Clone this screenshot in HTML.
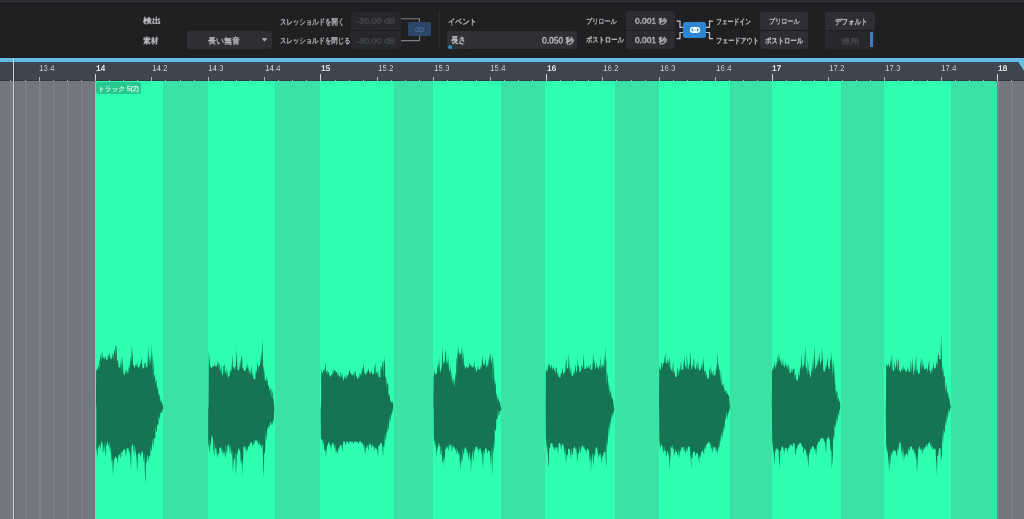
<!DOCTYPE html>
<html><head><meta charset="utf-8">
<style>
*{margin:0;padding:0;box-sizing:border-box}
html,body{width:1024px;height:519px;overflow:hidden;background:#1f2022;font-family:"Liberation Sans",sans-serif}
.abs{position:absolute}
#top{position:absolute;left:0;top:0;width:1024px;height:58px;background:#1f2022}
#topstrip{position:absolute;left:0;top:0;width:1024px;height:4.2px;background:#2a2b2e;border-bottom:1.2px solid #161719}
#blue{position:absolute;left:0;top:58px;width:1024px;height:4px;background:linear-gradient(#78bde3 0,#63bbe2 1.2px,#60bae2 3px,#6bc0e6 4px)}
#navy{position:absolute;left:0;top:56.5px;width:1024px;height:1.5px;background:#161c28}
#tri{position:absolute;left:1018.3px;top:62px;width:0;height:0;border-top:8.5px solid #66bfe6;border-left:5.7px solid transparent}
#ruler{position:absolute;left:0;top:62px;width:1024px;height:19px;background:linear-gradient(#354960 0,#3b4656 1.5px,#3c4550 3px,#3c4550 100%);overflow:hidden}
.tk{position:absolute;bottom:0;width:1px;height:1.5px;background:#aeb2b9}
.tt{height:4px}
.tb{height:7px;width:1px;background:#d0d3d8}
.lb{position:absolute;will-change:transform;top:1.5px;font-size:20px;color:#c3c6cc;letter-spacing:0;line-height:1;transform:scale(0.4);transform-origin:0 0}
.lbb{font-weight:bold;-webkit-text-stroke:0;color:#e2e4e8;transform:scale(0.42);top:1.6px}
#main{position:absolute;left:0;top:81px;width:1024px;height:438px;background:#73767e;overflow:hidden}
.gl{position:absolute;top:0;width:1.5px;height:438px;background:rgba(255,255,255,0.05)}
.gb{background:rgba(255,255,255,0.09)}
.evd{position:absolute;top:0;height:438px;background:#3be2a5;border-radius:3px 3px 0 0}
.evb{position:absolute;top:0;height:438px;background:#2effb1}
#play{position:absolute;left:12.6px;top:58px;width:1.4px;height:461px;background:#cdd1d8;box-shadow:1px 0 1px rgba(0,0,0,0.12)}
.t{position:absolute;color:#c9cbd0;font-size:9.5px;white-space:nowrap;line-height:1}
.tt2{position:absolute;will-change:transform;font-size:10px;line-height:1;white-space:nowrap;transform-origin:0 0;-webkit-text-stroke:0.4px currentColor}
.box{position:absolute;background:#2c2e32;border-radius:3px}
</style></head><body>
<div id="top"></div>
<div id="topstrip"></div>
<div id="navy"></div>
<div id="blue"></div>
<div id="ruler">
<div class="abs" style="left:0;bottom:0;width:1024px;height:1.2px;background:#2f3b42"></div>
<div class="tk" style="left:10px"></div>
<div class="tk" style="left:25px"></div>
<div class="tk tt" style="left:39px"></div>
<div class="tk" style="left:53px"></div>
<div class="tk" style="left:67px"></div>
<div class="tk" style="left:81px"></div>
<div class="tk tb" style="left:95px"></div>
<div class="tk" style="left:109px"></div>
<div class="tk" style="left:123px"></div>
<div class="tk" style="left:137px"></div>
<div class="tk tt" style="left:151px"></div>
<div class="tk" style="left:165px"></div>
<div class="tk" style="left:180px"></div>
<div class="tk" style="left:194px"></div>
<div class="tk tt" style="left:208px"></div>
<div class="tk" style="left:222px"></div>
<div class="tk" style="left:236px"></div>
<div class="tk" style="left:250px"></div>
<div class="tk tt" style="left:264px"></div>
<div class="tk" style="left:278px"></div>
<div class="tk" style="left:292px"></div>
<div class="tk" style="left:306px"></div>
<div class="tk tb" style="left:320px"></div>
<div class="tk" style="left:335px"></div>
<div class="tk" style="left:349px"></div>
<div class="tk" style="left:363px"></div>
<div class="tk tt" style="left:377px"></div>
<div class="tk" style="left:391px"></div>
<div class="tk" style="left:405px"></div>
<div class="tk" style="left:419px"></div>
<div class="tk tt" style="left:433px"></div>
<div class="tk" style="left:447px"></div>
<div class="tk" style="left:461px"></div>
<div class="tk" style="left:476px"></div>
<div class="tk tt" style="left:490px"></div>
<div class="tk" style="left:504px"></div>
<div class="tk" style="left:518px"></div>
<div class="tk" style="left:532px"></div>
<div class="tk tb" style="left:546px"></div>
<div class="tk" style="left:560px"></div>
<div class="tk" style="left:574px"></div>
<div class="tk" style="left:588px"></div>
<div class="tk tt" style="left:602px"></div>
<div class="tk" style="left:616px"></div>
<div class="tk" style="left:631px"></div>
<div class="tk" style="left:645px"></div>
<div class="tk tt" style="left:659px"></div>
<div class="tk" style="left:673px"></div>
<div class="tk" style="left:687px"></div>
<div class="tk" style="left:701px"></div>
<div class="tk tt" style="left:715px"></div>
<div class="tk" style="left:729px"></div>
<div class="tk" style="left:743px"></div>
<div class="tk" style="left:757px"></div>
<div class="tk tb" style="left:772px"></div>
<div class="tk" style="left:786px"></div>
<div class="tk" style="left:800px"></div>
<div class="tk" style="left:814px"></div>
<div class="tk tt" style="left:828px"></div>
<div class="tk" style="left:842px"></div>
<div class="tk" style="left:856px"></div>
<div class="tk" style="left:870px"></div>
<div class="tk tt" style="left:884px"></div>
<div class="tk" style="left:898px"></div>
<div class="tk" style="left:912px"></div>
<div class="tk" style="left:927px"></div>
<div class="tk tt" style="left:941px"></div>
<div class="tk" style="left:955px"></div>
<div class="tk" style="left:969px"></div>
<div class="tk" style="left:983px"></div>
<div class="tk tb" style="left:997px"></div>
<div class="tk" style="left:1011px"></div>
<div class="lb" style="left:39.3px">13.4</div>
<div class="lb lbb" style="left:95.8px">14</div>
<div class="lb" style="left:152.1px">14.2</div>
<div class="lb" style="left:208.4px">14.3</div>
<div class="lb" style="left:264.8px">14.4</div>
<div class="lb lbb" style="left:321.3px">15</div>
<div class="lb" style="left:377.6px">15.2</div>
<div class="lb" style="left:433.9px">15.3</div>
<div class="lb" style="left:490.3px">15.4</div>
<div class="lb lbb" style="left:546.8px">16</div>
<div class="lb" style="left:603.1px">16.2</div>
<div class="lb" style="left:659.5px">16.3</div>
<div class="lb" style="left:715.8px">16.4</div>
<div class="lb lbb" style="left:772.3px">17</div>
<div class="lb" style="left:828.6px">17.2</div>
<div class="lb" style="left:885.0px">17.3</div>
<div class="lb" style="left:941.3px">17.4</div>
<div class="lb lbb" style="left:997.8px">18</div>
</div>
<svg class="abs" style="left:1010px;top:56px" width="14" height="20"><path d="M8.3,6 L14,6 L14,14.8Z" fill="#66bfe6"/></svg>
<div id="main">
<div class="gl" style="left:10px"></div>
<div class="gl" style="left:25px"></div>
<div class="gl gb" style="left:39px"></div>
<div class="gl" style="left:53px"></div>
<div class="gl" style="left:67px"></div>
<div class="gl" style="left:81px"></div>
<div class="gl gb" style="left:95px"></div>
<div class="gl" style="left:109px"></div>
<div class="gl" style="left:123px"></div>
<div class="gl" style="left:137px"></div>
<div class="gl gb" style="left:151px"></div>
<div class="gl" style="left:165px"></div>
<div class="gl" style="left:180px"></div>
<div class="gl" style="left:194px"></div>
<div class="gl gb" style="left:208px"></div>
<div class="gl" style="left:222px"></div>
<div class="gl" style="left:236px"></div>
<div class="gl" style="left:250px"></div>
<div class="gl gb" style="left:264px"></div>
<div class="gl" style="left:278px"></div>
<div class="gl" style="left:292px"></div>
<div class="gl" style="left:306px"></div>
<div class="gl gb" style="left:320px"></div>
<div class="gl" style="left:335px"></div>
<div class="gl" style="left:349px"></div>
<div class="gl" style="left:363px"></div>
<div class="gl gb" style="left:377px"></div>
<div class="gl" style="left:391px"></div>
<div class="gl" style="left:405px"></div>
<div class="gl" style="left:419px"></div>
<div class="gl gb" style="left:433px"></div>
<div class="gl" style="left:447px"></div>
<div class="gl" style="left:461px"></div>
<div class="gl" style="left:476px"></div>
<div class="gl gb" style="left:490px"></div>
<div class="gl" style="left:504px"></div>
<div class="gl" style="left:518px"></div>
<div class="gl" style="left:532px"></div>
<div class="gl gb" style="left:546px"></div>
<div class="gl" style="left:560px"></div>
<div class="gl" style="left:574px"></div>
<div class="gl" style="left:588px"></div>
<div class="gl gb" style="left:602px"></div>
<div class="gl" style="left:616px"></div>
<div class="gl" style="left:631px"></div>
<div class="gl" style="left:645px"></div>
<div class="gl gb" style="left:659px"></div>
<div class="gl" style="left:673px"></div>
<div class="gl" style="left:687px"></div>
<div class="gl" style="left:701px"></div>
<div class="gl gb" style="left:715px"></div>
<div class="gl" style="left:729px"></div>
<div class="gl" style="left:743px"></div>
<div class="gl" style="left:757px"></div>
<div class="gl gb" style="left:772px"></div>
<div class="gl" style="left:786px"></div>
<div class="gl" style="left:800px"></div>
<div class="gl" style="left:814px"></div>
<div class="gl gb" style="left:828px"></div>
<div class="gl" style="left:842px"></div>
<div class="gl" style="left:856px"></div>
<div class="gl" style="left:870px"></div>
<div class="gl gb" style="left:884px"></div>
<div class="gl" style="left:898px"></div>
<div class="gl" style="left:912px"></div>
<div class="gl" style="left:927px"></div>
<div class="gl gb" style="left:941px"></div>
<div class="gl" style="left:955px"></div>
<div class="gl" style="left:969px"></div>
<div class="gl" style="left:983px"></div>
<div class="gl gb" style="left:997px"></div>
<div class="gl" style="left:1011px"></div>
<div class="abs" style="left:84px;top:0;width:2px;height:438px;background:#6f7a7e"></div><div class="abs" style="left:86px;top:0;width:8.5px;height:438px;background:#77757f"></div>
<div class="evd" style="left:95px;width:902px"></div>
<div class="evb" style="left:95px;width:68.2px;border-radius:3px 0 0 0;"></div>
<div class="evb" style="left:207.7px;width:67.3px;"></div>
<div class="evb" style="left:320.4px;width:73.4px;"></div>
<div class="evb" style="left:433px;width:68.4px;"></div>
<div class="evb" style="left:545.1px;width:69.6px;"></div>
<div class="evb" style="left:658.6px;width:71.7px;"></div>
<div class="evb" style="left:771.6px;width:69.2px;"></div>
<div class="evb" style="left:884.2px;width:66.8px;"></div>
<div class="abs" style="left:96.3px;top:1.4px;width:44.7px;height:11.2px;background:#25c88d;border-radius:2.5px"></div>
</div>
<svg class="abs" style="left:0;top:0" width="1024" height="519"><defs><filter id="bl" x="-5%" y="-5%" width="110%" height="110%"><feGaussianBlur stdDeviation="0.4"/></filter></defs><g filter="url(#bl)"><path fill="#137352" d="M95.9,405.8 L96.2,371.1 L97.0,369.3 L97.8,369.3 L98.1,366.7 L98.6,365.2 L99.4,369.4 L99.5,361.0 L100.2,358.3 L100.9,353.8 L101.0,363.6 L101.8,352.6 L102.4,351.8 L102.6,358.5 L103.4,356.9 L103.8,358.4 L104.2,360.0 L105.0,356.4 L105.3,355.6 L105.8,358.7 L106.6,359.8 L106.7,360.0 L107.4,359.9 L108.2,353.8 L108.2,353.9 L109.0,358.8 L109.6,352.6 L109.8,353.2 L110.6,358.8 L111.1,359.7 L111.4,358.9 L112.2,357.9 L112.5,353.9 L113.0,353.6 L113.8,359.0 L114.0,350.9 L114.6,349.5 L115.4,358.1 L115.4,346.6 L116.1,345.6 L116.2,345.9 L116.8,351.0 L117.0,360.8 L117.8,360.2 L118.3,363.5 L118.6,367.4 L119.4,367.2 L119.7,367.8 L120.2,367.2 L121.0,359.2 L121.2,356.7 L121.8,373.5 L122.6,356.7 L122.6,354.5 L123.4,373.1 L124.1,374.3 L124.2,375.0 L125.0,374.9 L125.5,369.9 L125.8,370.2 L126.6,372.9 L127.0,368.5 L127.4,371.7 L127.7,374.0 L128.2,373.6 L129.0,365.0 L129.1,364.0 L129.8,369.8 L130.6,356.4 L130.6,356.5 L131.4,362.2 L131.7,346.0 L132.2,350.5 L132.7,356.5 L133.0,364.8 L133.8,365.4 L134.2,368.2 L134.6,368.1 L135.4,365.1 L135.6,363.9 L136.2,367.0 L137.0,362.0 L137.1,361.4 L137.8,366.7 L138.5,367.8 L138.6,367.8 L139.4,367.2 L140.0,363.8 L140.2,363.6 L141.0,364.4 L141.4,356.9 L141.8,360.0 L142.6,369.1 L142.9,369.0 L143.4,367.7 L144.2,368.6 L144.3,364.0 L145.0,363.3 L145.7,361.4 L145.8,369.1 L146.6,365.4 L147.2,368.0 L147.4,367.2 L148.2,353.5 L148.6,344.6 L149.0,365.7 L149.8,356.4 L150.1,356.9 L150.6,365.3 L151.4,346.5 L151.5,343.5 L152.2,375.0 L152.5,352.6 L153.0,359.4 L153.7,368.1 L153.8,379.2 L154.6,374.4 L155.1,375.4 L155.4,384.6 L156.2,379.9 L156.6,379.9 L157.0,391.3 L157.8,386.6 L158.0,387.0 L158.6,395.9 L159.4,393.8 L159.5,394.2 L160.2,402.8 L160.9,398.6 L161.0,399.2 L161.8,403.3 L162.4,403.6 L163.1,407.3 L163.2,408.3 L161.9,411.8 L161.1,413.6 L160.3,412.1 L160.2,416.5 L159.5,419.4 L158.7,413.6 L158.6,423.1 L157.9,426.1 L157.1,423.4 L156.9,431.2 L156.3,432.5 L155.5,425.3 L155.3,437.8 L154.7,439.2 L153.9,437.2 L153.7,444.3 L153.1,446.0 L152.3,438.1 L152.0,450.9 L151.5,450.4 L150.7,444.6 L150.4,454.4 L149.9,456.5 L149.1,455.0 L148.7,462.0 L148.3,459.5 L147.5,454.5 L147.1,455.4 L146.7,461.4 L145.9,463.7 L145.5,483.7 L145.1,477.7 L144.3,452.1 L143.8,462.6 L143.5,459.2 L142.7,451.6 L142.2,451.6 L141.9,452.1 L141.1,453.0 L140.5,457.4 L140.3,456.1 L139.5,452.6 L138.7,453.0 L138.6,453.2 L137.9,455.0 L137.3,471.8 L137.1,468.2 L136.3,454.7 L135.6,451.9 L135.5,450.6 L134.7,444.5 L134.0,457.0 L133.9,454.5 L133.1,445.3 L132.3,444.2 L132.3,444.1 L131.5,447.1 L131.0,470.4 L130.7,465.3 L129.9,447.9 L129.4,454.6 L129.1,452.5 L128.3,448.1 L127.5,448.1 L127.4,448.2 L126.7,449.4 L125.9,456.3 L125.8,457.4 L125.1,448.2 L124.3,449.8 L124.1,449.7 L123.5,449.5 L122.7,451.5 L122.2,452.7 L121.9,450.2 L121.1,456.6 L120.5,459.0 L120.3,452.1 L119.5,455.3 L118.9,454.7 L118.7,454.5 L117.9,460.0 L117.3,463.8 L117.1,458.3 L116.3,457.7 L116.0,456.3 L115.5,456.4 L114.7,458.2 L114.3,459.4 L113.9,459.3 L113.1,473.2 L113.0,476.5 L112.3,457.3 L111.9,462.8 L111.5,459.9 L110.7,444.5 L110.2,454.2 L109.9,451.6 L109.1,442.2 L108.6,447.5 L108.3,445.3 L107.5,440.2 L107.4,440.5 L106.7,447.3 L105.9,442.0 L105.8,457.3 L105.1,451.8 L104.5,448.1 L104.3,442.2 L103.5,450.6 L102.8,453.6 L102.7,441.8 L101.9,444.2 L101.5,441.1 L101.1,441.4 L100.4,450.2 L100.3,449.5 L99.5,444.1 L98.7,446.5 L98.7,446.7 L97.9,448.7 L97.6,458.2 L97.1,453.7 L96.3,447.6 L96.3,405.0Z"/><path fill="#137352" d="M208.5,410.0 L208.8,350.9 L209.5,359.4 L209.6,360.4 L210.4,367.0 L210.5,366.7 L211.2,367.7 L211.7,368.0 L212.0,368.0 L212.8,366.2 L213.1,365.4 L213.6,367.2 L214.4,364.6 L214.6,364.0 L215.2,366.5 L216.0,366.6 L216.0,366.7 L216.8,366.2 L217.5,361.9 L217.6,361.9 L218.4,367.9 L218.6,360.6 L219.2,364.5 L219.6,365.3 L220.0,373.5 L220.6,369.0 L220.8,368.9 L221.5,363.8 L221.6,370.8 L222.4,375.2 L222.5,376.4 L223.2,373.2 L223.5,365.4 L224.0,366.2 L224.7,363.7 L224.8,374.8 L225.6,370.6 L225.8,370.7 L226.4,377.4 L226.8,367.4 L227.2,369.7 L228.0,377.3 L228.3,378.2 L228.8,376.2 L229.6,376.0 L229.7,371.3 L230.4,371.4 L231.2,369.1 L231.2,374.5 L232.0,361.5 L232.6,355.2 L232.8,368.6 L233.6,365.9 L233.6,366.1 L234.4,369.4 L235.1,368.8 L235.2,367.7 L236.0,364.8 L236.2,349.3 L236.8,358.1 L237.4,367.3 L237.6,369.8 L238.4,370.3 L238.8,370.7 L239.2,369.8 L240.0,362.8 L240.3,359.6 L240.8,368.8 L241.3,353.9 L241.6,356.7 L242.3,359.6 L242.4,368.9 L243.2,367.6 L243.5,369.3 L244.0,371.0 L244.8,371.0 L244.9,370.8 L245.6,370.8 L246.4,365.4 L246.4,365.7 L247.2,369.3 L247.8,362.6 L248.0,363.7 L248.8,372.9 L249.0,368.3 L249.6,371.9 L250.0,373.4 L250.4,374.7 L251.2,367.4 L251.4,364.7 L252.0,376.9 L252.8,372.3 L252.9,372.5 L253.6,379.0 L254.3,379.6 L254.4,379.2 L255.2,379.5 L255.7,371.1 L256.0,369.8 L256.8,373.6 L257.2,361.6 L257.6,363.7 L258.4,371.4 L258.6,366.4 L259.2,365.8 L260.0,365.8 L260.1,363.6 L260.8,358.1 L261.5,349.4 L261.6,366.4 L262.4,340.0 L262.5,338.2 L263.2,374.4 L263.4,365.0 L264.0,370.0 L264.4,371.5 L264.8,379.5 L265.4,380.3 L265.6,380.3 L266.4,381.7 L266.6,374.5 L267.2,379.1 L267.7,381.1 L268.0,387.5 L268.8,384.1 L268.8,384.9 L269.6,391.8 L270.2,387.0 L270.4,388.0 L271.2,398.7 L271.6,388.7 L272.0,390.3 L272.7,393.2 L272.8,398.1 L273.5,399.1 L274.4,410.0 L274.5,405.0 L273.8,418.6 L273.0,423.0 L272.7,425.9 L272.2,420.6 L271.4,425.1 L271.0,424.7 L270.6,420.5 L269.8,425.7 L269.4,426.4 L269.0,425.3 L268.2,428.2 L267.8,429.7 L267.4,426.2 L266.6,441.0 L266.6,442.4 L265.8,429.8 L265.0,453.6 L265.0,454.5 L264.2,451.8 L263.7,479.1 L263.4,471.1 L262.6,443.5 L262.3,444.8 L261.8,445.4 L261.2,448.9 L261.0,445.5 L260.2,445.2 L259.6,443.0 L259.4,441.0 L258.6,444.2 L257.9,445.7 L257.8,440.1 L257.0,442.2 L256.3,439.6 L256.2,439.5 L255.4,441.1 L254.6,440.2 L254.6,442.8 L253.8,445.0 L253.0,441.2 L253.0,447.6 L252.2,444.5 L251.4,441.5 L251.4,441.5 L250.6,443.0 L249.8,443.5 L249.7,446.0 L249.0,447.2 L248.2,444.7 L248.1,449.3 L247.4,450.4 L246.6,446.3 L246.4,453.8 L245.8,450.5 L245.0,445.3 L244.8,444.9 L244.2,447.8 L243.4,446.7 L243.2,456.5 L242.6,464.3 L242.0,476.5 L241.8,458.8 L241.0,464.5 L240.7,460.9 L240.2,451.1 L239.4,450.3 L239.1,448.2 L238.6,448.1 L237.8,452.0 L237.4,454.7 L237.0,452.5 L236.2,470.1 L235.8,476.2 L235.4,450.2 L234.6,460.4 L234.5,459.5 L233.8,458.1 L233.0,472.2 L233.0,473.8 L232.2,450.5 L231.7,454.9 L231.4,453.5 L230.6,444.9 L230.0,455.3 L229.8,453.3 L229.0,443.6 L228.9,443.7 L228.2,445.8 L227.4,445.6 L227.3,450.9 L226.6,453.8 L225.8,444.5 L225.6,458.5 L225.0,456.1 L224.2,450.8 L224.0,452.6 L223.4,453.4 L222.6,447.0 L222.3,455.3 L221.8,452.5 L221.0,446.7 L220.7,446.4 L220.2,448.0 L219.4,447.7 L219.1,454.1 L218.6,454.4 L217.8,451.9 L217.4,458.6 L217.0,455.7 L216.2,448.2 L215.8,448.1 L215.4,449.7 L214.6,441.6 L214.5,457.2 L213.8,451.8 L213.2,447.4 L213.0,438.8 L212.2,436.9 L212.0,434.9 L211.4,436.6 L210.9,445.7 L210.6,446.9 L209.8,439.7 L209.6,453.5 L209.0,448.4 L208.2,442.7 L208.2,405.0Z"/><path fill="#137352" d="M321.1,410.0 L321.2,368.2 L322.0,373.3 L322.1,373.4 L322.8,373.1 L323.2,369.8 L323.6,370.5 L324.4,370.6 L324.4,373.2 L325.2,363.4 L325.4,362.0 L326.0,371.2 L326.4,372.0 L326.8,371.9 L327.6,370.0 L327.6,376.3 L328.4,371.6 L329.0,372.6 L329.2,375.3 L330.0,375.6 L330.5,376.9 L330.8,376.7 L331.6,373.9 L331.6,373.9 L332.4,375.6 L333.1,367.3 L333.2,368.7 L334.0,373.9 L334.1,370.8 L334.8,370.8 L335.5,369.8 L335.6,372.6 L336.4,371.9 L337.0,372.6 L337.2,376.6 L338.0,371.2 L338.0,371.9 L338.8,376.1 L339.4,376.6 L339.6,376.1 L340.4,378.6 L340.6,371.6 L341.2,373.4 L342.0,378.5 L342.0,374.2 L342.8,378.0 L343.5,381.2 L343.6,381.1 L344.4,376.9 L344.6,375.7 L345.2,379.5 L346.0,374.3 L346.1,374.1 L346.8,379.4 L347.5,375.3 L347.6,375.1 L348.4,375.4 L348.9,371.1 L349.2,371.0 L350.0,369.7 L350.0,373.4 L350.8,372.6 L351.4,373.9 L351.6,375.3 L352.4,375.0 L352.8,375.2 L353.2,375.3 L354.0,372.1 L354.3,371.2 L354.8,378.7 L355.3,370.1 L355.6,371.9 L356.4,378.0 L356.5,375.4 L357.2,377.9 L357.9,379.5 L358.0,379.5 L358.8,375.8 L359.4,372.9 L359.6,378.4 L360.4,373.7 L360.8,373.7 L361.2,375.9 L362.0,368.3 L362.2,366.8 L362.8,372.4 L363.4,363.0 L363.6,364.9 L364.4,374.1 L364.4,372.3 L365.2,374.2 L365.9,375.1 L366.0,375.0 L366.8,372.1 L367.3,369.9 L367.6,373.6 L368.4,369.0 L368.7,368.4 L369.2,373.1 L370.0,372.1 L370.2,372.5 L370.8,374.8 L371.6,370.1 L371.6,370.0 L372.4,374.4 L373.1,374.8 L373.2,374.8 L374.0,372.8 L374.5,366.9 L374.8,366.6 L375.5,363.2 L375.6,374.8 L376.4,371.1 L376.7,372.5 L377.2,375.6 L378.0,370.8 L378.1,370.1 L378.8,377.5 L379.6,377.3 L379.6,377.3 L380.4,377.0 L380.7,365.7 L381.2,366.2 L382.0,371.1 L382.2,363.8 L382.8,362.0 L383.2,359.6 L383.6,377.3 L384.2,355.3 L384.4,359.2 L385.1,365.2 L385.2,379.1 L386.0,375.4 L386.1,375.2 L386.8,389.3 L387.1,381.0 L387.6,384.2 L388.3,384.5 L388.4,396.7 L389.0,392.6 L389.2,394.8 L390.0,397.1 L390.0,400.8 L390.8,400.8 L391.1,401.3 L391.6,403.2 L392.3,400.4 L392.4,401.3 L393.2,405.2 L393.3,405.2 L393.7,410.0 L393.4,405.0 L392.7,410.2 L392.1,412.9 L391.4,416.5 L391.3,411.5 L390.5,419.8 L389.8,423.1 L389.7,413.3 L388.9,427.2 L388.1,431.2 L388.1,419.0 L387.3,433.3 L386.5,430.7 L386.2,439.4 L385.7,440.4 L384.9,433.1 L384.5,444.8 L384.1,447.3 L383.3,446.1 L383.2,458.2 L382.5,449.3 L382.4,447.9 L381.7,443.1 L380.9,443.2 L380.8,443.0 L380.1,443.3 L379.3,445.5 L379.1,446.3 L378.5,445.4 L378.0,456.8 L377.7,454.0 L376.9,446.8 L376.7,449.3 L376.1,449.3 L375.3,446.6 L375.0,450.7 L374.5,449.1 L373.7,445.8 L373.4,446.2 L372.9,446.8 L372.1,443.4 L371.7,449.0 L371.3,447.3 L370.5,443.6 L370.1,443.2 L369.7,444.4 L368.9,444.5 L368.5,450.6 L368.1,449.6 L367.3,444.4 L366.8,446.5 L366.5,447.4 L365.7,448.7 L365.2,454.1 L364.9,452.8 L364.1,443.2 L363.5,447.7 L363.3,446.4 L362.5,441.9 L361.9,444.3 L361.7,443.7 L360.9,441.4 L360.3,441.3 L360.1,441.3 L359.3,441.5 L358.6,444.2 L358.5,444.0 L357.7,441.5 L357.0,442.7 L356.9,442.4 L356.1,441.5 L355.3,441.2 L355.3,441.2 L354.5,441.6 L353.7,444.0 L353.7,444.2 L352.9,441.5 L352.1,442.7 L352.1,442.7 L351.3,441.5 L350.5,441.2 L350.4,441.1 L349.7,441.4 L348.9,444.1 L348.8,444.1 L348.1,442.0 L347.3,441.4 L347.1,441.2 L346.5,441.6 L345.7,445.0 L345.5,445.6 L344.9,441.2 L344.1,441.7 L343.9,441.5 L343.3,441.7 L342.5,449.5 L342.2,452.0 L341.7,444.6 L340.9,445.4 L340.6,444.8 L340.1,444.9 L339.3,448.0 L339.0,449.3 L338.5,447.6 L337.7,452.6 L337.3,453.9 L336.9,449.4 L336.1,452.5 L335.7,452.5 L335.3,443.6 L334.5,448.5 L334.0,447.6 L333.7,443.1 L332.9,444.2 L332.4,442.9 L332.1,442.1 L331.3,447.9 L330.8,450.3 L330.5,445.0 L329.7,444.4 L329.1,441.4 L328.9,441.4 L328.1,443.9 L327.5,446.2 L327.3,443.6 L326.5,451.7 L325.8,456.8 L325.7,447.9 L324.9,451.7 L324.2,449.3 L324.1,438.7 L323.3,445.6 L322.6,442.8 L322.5,439.1 L321.7,439.9 L320.9,437.8 L320.6,405.0Z"/><path fill="#137352" d="M433.3,410.0 L433.6,376.9 L434.4,372.0 L434.8,370.3 L435.2,375.6 L435.9,373.7 L436.0,374.1 L436.8,373.6 L436.9,370.9 L437.6,366.4 L438.0,364.0 L438.4,368.7 L439.1,356.9 L439.2,360.2 L440.0,372.2 L440.3,372.8 L440.8,371.0 L441.3,367.6 L441.6,370.3 L442.4,352.0 L442.7,345.9 L443.2,366.3 L443.7,362.3 L444.0,362.7 L444.8,361.5 L444.9,356.7 L445.6,352.1 L446.1,349.0 L446.4,366.2 L447.1,358.8 L447.2,360.2 L448.0,364.8 L448.1,354.7 L448.8,366.4 L449.2,371.1 L449.6,372.3 L450.4,364.1 L450.4,366.1 L451.2,381.4 L451.8,371.1 L452.0,374.2 L452.8,385.0 L453.3,377.3 L453.6,381.1 L454.3,386.9 L454.4,387.0 L455.2,373.2 L455.3,371.4 L456.0,382.7 L456.5,358.3 L456.8,359.0 L457.6,349.5 L457.6,367.8 L458.4,347.8 L458.6,346.6 L459.2,357.7 L459.6,352.3 L460.0,353.4 L460.8,354.8 L460.8,356.4 L461.6,350.8 L462.2,347.2 L462.4,362.4 L463.2,354.1 L463.4,352.5 L464.0,366.8 L464.4,363.7 L464.8,366.5 L465.4,369.4 L465.6,369.2 L466.4,366.1 L466.6,365.5 L467.2,368.2 L468.0,366.5 L468.0,366.9 L468.8,367.9 L469.5,362.7 L469.6,362.8 L470.4,366.7 L470.9,364.0 L471.2,365.1 L472.0,367.9 L472.4,368.1 L472.8,366.0 L473.6,367.4 L474.1,359.9 L474.4,362.9 L475.2,369.8 L475.2,366.7 L476.0,370.1 L476.7,372.1 L476.8,372.2 L477.6,367.5 L478.1,364.0 L478.4,370.2 L479.2,368.8 L479.6,369.4 L480.0,370.5 L480.8,366.2 L481.0,364.9 L481.6,369.0 L482.2,354.5 L482.4,356.6 L483.2,365.7 L483.6,363.9 L484.0,362.8 L484.8,366.8 L485.1,357.2 L485.6,361.3 L486.4,367.8 L486.5,367.6 L487.2,366.2 L488.0,363.7 L488.0,366.7 L488.8,359.0 L489.4,353.9 L489.6,363.0 L490.4,351.4 L490.4,352.8 L491.2,364.4 L491.4,362.9 L492.0,359.4 L492.6,352.8 L492.8,384.1 L493.6,358.9 L493.7,356.5 L494.4,386.9 L494.8,377.4 L495.2,382.4 L495.8,385.5 L496.0,397.3 L496.8,392.9 L496.9,392.7 L497.6,402.1 L498.4,397.1 L498.4,397.6 L499.2,402.1 L499.8,402.2 L501.3,410.0 L501.5,405.0 L501.1,409.1 L501.1,409.1 L500.3,411.2 L499.5,411.2 L499.5,414.7 L498.7,415.8 L497.9,409.7 L497.5,418.4 L497.1,419.9 L496.3,418.3 L496.2,426.5 L495.5,431.6 L494.7,429.5 L494.6,442.6 L493.9,448.3 L493.3,454.8 L493.1,438.9 L492.3,472.5 L492.1,475.9 L491.5,444.2 L491.0,467.2 L490.7,463.1 L489.9,451.5 L489.3,451.6 L489.1,450.9 L488.3,449.8 L487.7,454.1 L487.5,453.4 L486.7,449.0 L486.0,448.1 L485.9,448.1 L485.1,449.5 L484.4,454.2 L484.3,454.7 L483.5,449.2 L483.1,469.3 L482.7,463.9 L481.9,451.6 L481.8,454.7 L481.1,451.3 L480.3,447.8 L480.1,447.8 L479.5,450.0 L478.7,447.6 L478.5,453.7 L477.9,450.6 L477.1,446.6 L476.9,446.3 L476.3,447.0 L475.5,446.8 L475.2,449.5 L474.7,452.9 L473.9,447.3 L473.6,461.7 L473.1,459.1 L472.3,449.7 L472.0,454.9 L471.5,461.3 L470.8,473.1 L470.7,459.8 L469.9,457.5 L469.7,452.9 L469.1,452.0 L468.3,461.7 L468.3,459.7 L467.5,449.6 L467.0,454.1 L466.7,451.7 L465.9,446.2 L465.9,446.3 L465.1,448.8 L464.3,448.6 L464.2,452.5 L463.5,454.8 L462.7,446.9 L462.6,459.2 L461.9,462.2 L461.1,455.8 L461.0,470.0 L460.3,463.3 L459.8,461.0 L459.5,453.0 L458.7,454.8 L458.2,452.6 L457.9,449.3 L457.1,452.8 L456.5,453.9 L456.3,447.4 L455.5,450.4 L454.9,449.3 L454.7,447.4 L453.9,447.3 L453.3,446.3 L453.1,445.0 L452.3,448.8 L451.6,452.2 L451.5,443.6 L450.7,446.8 L450.0,443.3 L449.9,443.1 L449.1,447.6 L448.3,452.0 L448.3,443.5 L447.5,449.2 L446.7,445.1 L446.7,446.3 L445.9,449.5 L445.1,449.0 L445.1,454.5 L444.3,460.4 L443.8,466.5 L443.5,456.1 L442.7,462.7 L442.1,460.7 L441.9,447.2 L441.1,455.1 L440.5,454.0 L440.3,447.2 L439.5,445.6 L439.2,442.8 L438.7,443.1 L437.9,448.5 L437.5,451.0 L437.1,445.2 L436.4,458.5 L436.3,455.5 L435.5,439.1 L435.2,447.7 L434.7,443.6 L433.9,437.8 L433.6,405.0Z"/><path fill="#137352" d="M545.6,410.0 L545.9,368.2 L546.7,371.3 L547.1,371.8 L547.5,370.9 L548.1,364.3 L548.3,363.7 L549.1,368.3 L549.2,362.8 L549.9,365.9 L550.4,368.1 L550.7,369.4 L551.4,364.0 L551.5,364.6 L552.3,370.0 L552.4,369.7 L553.1,367.4 L553.6,365.9 L553.9,369.3 L554.7,370.8 L554.7,370.7 L555.5,373.6 L555.7,368.3 L556.3,368.0 L556.7,367.1 L557.1,376.8 L557.9,371.1 L557.9,371.5 L558.7,376.8 L559.1,376.7 L559.5,377.6 L560.1,377.9 L560.3,378.0 L561.1,372.6 L561.1,372.6 L561.9,373.7 L562.2,367.4 L562.7,369.9 L563.4,373.9 L563.5,375.4 L564.3,372.8 L564.4,372.6 L565.1,372.3 L565.6,363.9 L565.9,362.6 L566.6,357.7 L566.7,369.7 L567.5,367.7 L567.7,368.2 L568.3,368.4 L568.7,354.3 L569.1,359.6 L569.7,369.8 L569.9,374.6 L570.7,368.9 L570.9,366.8 L571.5,375.1 L572.3,376.3 L572.3,376.4 L573.1,375.5 L573.8,371.1 L573.9,371.2 L574.7,375.2 L575.2,364.5 L575.5,365.7 L576.3,373.0 L576.7,372.0 L577.1,367.1 L577.8,357.7 L577.9,367.4 L578.7,364.9 L578.8,365.2 L579.5,372.2 L580.3,371.7 L580.3,371.8 L581.1,370.5 L581.3,364.6 L581.9,366.2 L582.5,367.6 L582.7,370.3 L583.5,359.1 L583.9,353.9 L584.3,368.7 L585.1,368.8 L585.1,369.1 L585.9,369.1 L586.5,366.8 L586.7,366.7 L587.5,368.8 L588.0,364.2 L588.3,365.9 L589.0,369.2 L589.1,370.4 L589.9,365.1 L590.4,362.5 L590.7,370.1 L591.5,369.2 L591.9,370.4 L592.3,369.5 L593.1,356.2 L593.3,353.6 L593.9,366.0 L594.3,359.6 L594.7,362.8 L595.5,369.4 L595.8,368.8 L596.3,366.0 L596.9,361.2 L597.1,367.5 L597.9,367.1 L598.4,369.3 L598.7,369.5 L599.5,364.5 L599.5,363.6 L600.3,369.0 L600.5,355.4 L601.1,363.8 L601.5,368.4 L601.9,368.7 L602.7,363.9 L602.7,364.5 L603.5,367.7 L604.1,356.6 L604.3,356.9 L605.1,371.6 L605.3,345.6 L605.9,359.1 L606.3,363.1 L606.7,386.1 L607.5,372.8 L607.8,372.7 L608.3,391.3 L608.8,381.2 L609.1,383.9 L609.9,397.3 L609.9,389.8 L610.7,392.9 L611.1,392.9 L611.5,397.9 L612.1,397.1 L612.3,398.2 L613.1,400.6 L614.3,410.0 L614.8,405.0 L614.5,408.4 L613.9,411.0 L613.3,414.7 L613.1,411.6 L612.3,416.6 L611.7,419.8 L611.5,413.1 L610.7,421.9 L610.0,426.7 L609.9,420.8 L609.1,434.9 L608.9,437.6 L608.3,424.4 L607.6,446.8 L607.5,446.2 L606.7,438.8 L606.3,468.6 L605.9,463.3 L605.1,444.8 L605.1,451.9 L604.3,452.1 L603.5,452.2 L603.5,454.3 L602.7,457.8 L601.9,454.6 L601.8,463.3 L601.1,459.0 L600.3,451.8 L600.2,454.3 L599.5,455.6 L598.7,451.9 L598.6,459.9 L597.9,454.4 L597.1,446.9 L596.9,446.2 L596.3,448.1 L595.5,448.5 L595.3,452.8 L594.7,457.4 L593.9,451.2 L593.6,466.7 L593.1,462.1 L592.3,452.7 L592.0,455.5 L591.5,461.4 L590.9,473.8 L590.7,453.0 L589.9,462.8 L589.2,454.4 L589.1,448.6 L588.3,450.7 L587.6,448.1 L587.5,448.1 L586.7,450.7 L585.9,454.2 L585.9,448.7 L585.1,450.9 L584.3,444.7 L584.3,449.3 L583.5,447.0 L582.7,444.5 L582.7,444.6 L581.9,448.1 L581.1,445.9 L581.0,453.7 L580.3,451.3 L579.5,445.3 L579.4,449.7 L578.7,454.1 L577.9,452.7 L577.7,461.7 L577.1,458.1 L576.3,446.9 L576.1,451.1 L575.5,449.0 L574.7,446.2 L574.5,446.2 L573.9,448.3 L573.1,448.5 L572.8,454.1 L572.3,455.0 L571.5,446.9 L571.2,460.7 L570.7,456.2 L569.9,449.1 L569.5,448.4 L569.1,449.2 L568.3,448.2 L567.9,454.2 L567.5,455.4 L566.7,454.0 L566.3,461.8 L565.9,460.1 L565.1,447.0 L564.6,454.1 L564.3,452.4 L563.5,444.6 L563.0,444.7 L562.7,445.2 L561.9,443.0 L561.3,450.4 L561.1,449.6 L560.3,443.7 L559.7,442.9 L559.5,443.8 L558.7,443.0 L558.1,453.5 L557.9,453.0 L557.1,446.3 L556.4,447.7 L556.3,447.6 L555.5,447.4 L554.8,450.7 L554.7,449.8 L553.9,445.4 L553.1,449.2 L553.1,448.3 L552.3,443.1 L551.5,443.1 L551.5,443.1 L550.7,443.4 L549.9,447.0 L549.9,448.3 L549.1,448.3 L548.6,467.2 L548.3,466.1 L547.5,443.2 L547.2,454.1 L546.7,446.8 L545.9,437.8 L545.6,405.0Z"/><path fill="#137352" d="M659.0,410.0 L659.3,365.3 L660.1,369.4 L660.5,370.2 L660.9,369.2 L661.5,361.7 L661.7,361.9 L662.5,368.9 L662.9,363.6 L663.3,362.7 L664.1,363.3 L664.4,359.4 L664.9,356.6 L665.4,353.2 L665.7,362.8 L666.5,363.4 L666.6,363.5 L667.3,362.8 L667.7,357.5 L668.1,360.6 L668.7,362.9 L668.9,369.0 L669.7,355.9 L669.7,355.0 L670.5,371.3 L670.9,366.5 L671.3,369.2 L672.1,372.1 L672.1,373.1 L672.9,364.8 L673.1,361.4 L673.7,372.5 L674.5,371.0 L674.5,371.9 L675.3,376.8 L676.0,377.5 L676.1,376.9 L676.9,376.2 L677.4,366.1 L677.7,369.2 L678.4,372.0 L678.5,376.6 L679.3,370.4 L679.9,368.2 L680.1,370.6 L680.9,362.2 L681.0,360.5 L681.7,370.2 L682.2,370.3 L682.5,369.4 L683.3,369.4 L683.6,363.8 L684.1,360.9 L684.6,355.9 L684.9,365.0 L685.6,367.2 L685.7,366.6 L686.5,369.7 L686.8,353.4 L687.3,361.5 L687.9,369.8 L688.1,370.4 L688.9,366.5 L689.4,363.5 L689.7,364.8 L690.4,351.2 L690.5,352.9 L691.3,370.1 L691.4,369.7 L692.1,367.7 L692.9,363.9 L692.9,369.9 L693.7,359.0 L694.0,357.5 L694.5,367.0 L695.2,368.8 L695.3,369.0 L696.1,369.6 L696.6,363.9 L696.9,363.6 L697.7,370.5 L697.8,358.8 L698.5,366.2 L699.1,371.0 L699.3,371.0 L700.1,369.2 L700.5,368.2 L700.9,370.6 L701.7,364.6 L702.0,363.6 L702.5,370.7 L703.1,355.9 L703.3,359.9 L704.1,367.8 L704.1,372.8 L704.9,370.3 L705.6,371.1 L705.7,377.5 L706.5,373.5 L707.0,374.2 L707.3,378.0 L708.1,379.1 L708.2,378.9 L708.9,378.4 L709.2,370.0 L709.7,369.1 L710.5,376.7 L710.6,364.4 L711.3,369.9 L712.1,375.4 L712.1,376.0 L712.9,372.2 L713.5,370.1 L713.7,376.1 L714.5,374.8 L715.0,376.0 L715.3,375.4 L716.1,367.4 L716.4,363.8 L716.9,373.8 L717.4,353.6 L717.7,356.8 L718.5,370.4 L718.6,363.9 L719.3,369.5 L719.7,370.8 L720.1,382.8 L720.9,371.7 L721.2,371.9 L721.7,386.0 L722.2,383.3 L722.5,384.1 L723.3,388.7 L723.6,383.0 L724.1,386.0 L724.9,393.1 L725.1,391.3 L725.7,391.3 L726.5,390.1 L726.5,395.0 L727.3,392.4 L728.0,394.2 L728.1,395.1 L728.9,395.5 L729.0,395.5 L730.1,410.0 L730.1,405.0 L729.6,409.2 L729.0,411.3 L728.4,414.8 L728.2,411.2 L727.4,417.7 L727.1,419.7 L726.6,410.5 L725.8,420.4 L725.8,421.6 L725.0,416.4 L724.7,426.3 L724.2,428.8 L723.5,432.8 L723.4,424.4 L722.6,435.4 L722.2,437.8 L721.8,431.0 L721.0,441.1 L720.6,442.8 L720.2,435.6 L719.4,446.9 L718.9,449.3 L718.6,443.7 L717.8,452.4 L717.3,453.9 L717.0,447.5 L716.2,451.8 L715.7,450.9 L715.4,446.6 L714.6,447.8 L714.0,446.4 L713.8,446.6 L713.0,450.1 L712.4,453.8 L712.2,444.3 L711.4,449.6 L710.7,447.6 L710.6,444.0 L709.8,443.6 L709.1,441.4 L709.0,441.4 L708.2,442.7 L707.5,444.3 L707.4,442.1 L706.6,445.5 L705.8,444.3 L705.8,447.7 L705.0,449.7 L704.2,446.8 L704.2,454.2 L703.4,452.6 L702.6,449.3 L702.5,451.1 L701.8,452.3 L701.0,451.8 L700.9,454.3 L700.2,457.7 L699.4,454.8 L699.3,463.3 L698.6,459.3 L697.8,452.6 L697.6,453.0 L697.0,454.0 L696.2,452.4 L696.0,457.1 L695.4,455.2 L694.6,451.5 L694.3,451.2 L693.8,451.9 L693.0,451.7 L692.7,454.4 L692.2,458.9 L691.4,456.8 L691.4,469.7 L690.6,457.2 L690.2,451.6 L689.8,447.0 L689.0,447.2 L688.6,446.3 L688.2,446.3 L687.4,450.4 L687.0,452.4 L686.6,447.3 L685.8,452.8 L685.3,454.0 L685.0,446.5 L684.2,451.2 L683.7,450.9 L683.4,446.5 L682.6,447.7 L682.0,446.4 L681.8,446.4 L681.0,450.0 L680.4,452.5 L680.2,448.5 L679.4,455.6 L678.8,458.7 L678.6,448.3 L677.8,455.6 L677.1,454.2 L677.0,451.2 L676.2,452.3 L675.5,451.2 L675.4,448.0 L674.6,453.1 L673.9,456.8 L673.8,447.0 L673.0,450.6 L672.2,444.6 L672.2,444.8 L671.4,448.8 L670.6,445.2 L670.6,454.7 L669.8,463.5 L669.4,470.6 L669.0,450.7 L668.2,455.9 L667.8,451.9 L667.4,450.1 L666.6,455.4 L666.1,457.2 L665.8,450.3 L665.0,451.4 L664.5,449.7 L664.2,446.3 L663.4,453.1 L663.2,454.0 L662.6,445.7 L661.9,446.3 L661.8,445.9 L661.0,442.2 L660.7,450.4 L660.2,446.5 L659.4,441.1 L659.1,405.0Z"/><path fill="#137352" d="M771.8,410.0 L772.1,371.1 L772.9,368.1 L773.1,366.8 L773.7,370.1 L774.2,361.6 L774.5,363.6 L775.3,370.0 L775.4,367.5 L776.1,363.9 L776.4,361.1 L776.9,367.4 L777.7,356.2 L777.8,353.9 L778.5,362.5 L778.8,352.7 L779.3,356.6 L780.0,361.9 L780.1,363.5 L780.9,359.6 L781.2,358.8 L781.7,366.6 L782.2,364.5 L782.5,363.5 L783.2,359.0 L783.3,365.9 L784.1,364.4 L784.6,367.6 L784.9,367.4 L785.7,362.2 L785.8,361.2 L786.5,367.6 L787.2,365.1 L787.3,365.7 L788.1,370.8 L788.7,363.1 L788.9,365.0 L789.7,372.9 L790.1,373.4 L790.5,372.7 L791.3,371.7 L791.6,368.3 L792.1,368.7 L792.9,373.4 L793.0,369.6 L793.7,369.2 L794.5,368.6 L794.5,378.9 L795.3,373.4 L795.9,375.4 L796.1,380.4 L796.9,379.4 L797.3,380.9 L797.7,380.9 L798.5,374.3 L798.8,371.2 L799.3,378.3 L800.1,367.4 L800.2,365.0 L800.9,369.8 L801.4,353.9 L801.7,356.9 L802.4,368.4 L802.5,369.1 L803.3,366.7 L803.8,363.6 L804.1,367.1 L804.9,352.4 L805.3,345.6 L805.7,367.2 L806.3,368.2 L806.5,367.1 L807.3,375.4 L807.8,357.5 L808.1,362.3 L808.9,374.6 L808.9,369.4 L809.7,374.5 L810.4,377.8 L810.5,378.0 L811.3,372.1 L811.8,366.8 L812.1,374.1 L812.9,358.0 L813.0,356.6 L813.7,372.3 L814.4,344.5 L814.5,347.6 L815.3,369.5 L815.4,369.1 L816.1,368.0 L816.9,363.9 L816.9,367.2 L817.7,361.3 L818.3,356.7 L818.5,365.9 L819.3,352.7 L819.3,352.4 L820.1,363.8 L820.5,365.2 L820.9,361.6 L821.7,361.0 L821.9,347.0 L822.5,356.1 L823.1,363.8 L823.3,371.4 L824.1,369.8 L824.5,372.1 L824.9,372.0 L825.7,366.0 L826.0,363.9 L826.5,368.3 L827.3,358.2 L827.4,356.2 L828.1,365.8 L828.8,369.1 L828.9,369.0 L829.7,369.1 L830.3,358.1 L830.5,357.1 L831.3,365.7 L831.3,350.9 L832.1,361.3 L832.3,363.7 L832.9,377.9 L833.5,359.8 L833.7,361.3 L834.5,387.0 L834.6,363.1 L835.2,383.3 L835.3,385.3 L836.1,397.7 L836.4,389.8 L836.9,392.1 L837.5,391.5 L837.7,401.8 L838.5,397.1 L838.5,397.1 L839.3,401.4 L840.0,402.2 L840.7,410.0 L840.1,405.0 L840.0,409.9 L839.4,410.1 L839.1,414.5 L838.6,415.7 L837.8,411.7 L837.8,418.3 L837.0,421.9 L836.7,424.5 L836.2,414.7 L835.5,428.1 L835.4,426.9 L834.6,424.2 L834.2,437.9 L833.8,439.8 L833.0,435.1 L832.9,454.3 L832.2,463.5 L831.8,470.3 L831.4,450.4 L830.6,450.4 L830.1,445.0 L829.8,439.4 L829.0,438.8 L828.5,436.3 L828.2,436.4 L827.4,438.8 L827.3,439.9 L826.6,438.7 L826.0,453.8 L825.8,452.4 L825.0,439.8 L824.4,443.0 L824.2,441.9 L823.4,438.3 L822.7,437.8 L822.6,437.9 L821.8,438.1 L821.1,439.5 L821.0,439.3 L820.2,438.5 L819.5,442.7 L819.4,442.1 L818.6,441.0 L817.8,444.5 L817.8,444.7 L817.0,444.7 L816.2,454.9 L816.2,456.8 L815.4,448.4 L814.6,449.7 L814.5,449.4 L813.8,447.0 L813.0,446.3 L812.9,446.2 L812.2,446.2 L811.4,448.8 L811.3,449.3 L810.6,448.5 L809.8,452.6 L809.6,454.7 L809.0,451.7 L808.3,467.9 L808.2,467.2 L807.4,452.1 L807.2,457.7 L806.6,454.8 L805.8,449.9 L805.5,449.5 L805.0,450.5 L804.2,446.9 L803.9,453.7 L803.4,452.1 L802.6,445.4 L802.2,447.6 L801.8,446.0 L801.0,443.1 L800.6,443.0 L800.2,443.0 L799.4,443.3 L799.0,444.4 L798.6,444.8 L797.8,444.3 L797.3,447.8 L797.0,449.1 L796.2,448.1 L795.7,456.8 L795.4,454.6 L794.6,444.7 L794.0,443.2 L793.8,443.3 L793.0,443.1 L792.4,447.3 L792.2,447.2 L791.4,444.2 L790.8,444.5 L790.6,444.7 L789.8,445.0 L789.1,449.2 L789.0,448.7 L788.2,446.4 L787.5,452.5 L787.4,451.3 L786.6,448.3 L785.9,448.1 L785.8,448.0 L785.0,447.6 L784.2,453.3 L784.2,453.9 L783.4,448.2 L782.6,446.5 L782.6,446.4 L781.8,446.7 L781.0,450.0 L780.9,451.6 L780.2,450.1 L779.8,469.4 L779.4,463.4 L778.8,454.7 L778.6,450.0 L777.8,450.2 L777.2,448.0 L777.0,448.0 L776.2,449.2 L775.5,451.2 L775.4,446.2 L774.6,462.3 L774.4,465.4 L773.8,449.1 L773.6,454.5 L773.0,448.3 L772.2,441.1 L771.9,405.0Z"/><path fill="#137352" d="M885.9,410.0 L886.2,363.9 L887.0,365.2 L887.4,365.4 L887.8,367.2 L888.5,362.8 L888.6,363.5 L889.4,367.7 L889.6,367.6 L890.2,364.2 L890.8,358.0 L891.0,371.4 L891.8,354.9 L892.0,354.5 L892.6,368.6 L893.1,371.7 L893.4,370.2 L894.2,371.2 L894.2,361.0 L895.0,365.7 L895.4,366.9 L895.8,369.9 L896.6,358.1 L896.6,356.6 L897.4,371.8 L897.7,366.0 L898.2,363.2 L898.8,356.3 L899.0,371.0 L899.8,369.4 L900.0,372.0 L900.6,372.5 L901.4,369.2 L901.6,368.6 L902.2,371.5 L903.0,365.8 L903.1,365.6 L903.8,370.2 L904.6,368.4 L904.7,368.5 L905.4,371.4 L906.2,371.7 L906.2,371.4 L907.0,371.8 L907.7,365.9 L907.8,366.9 L908.6,371.3 L909.3,372.3 L909.4,372.2 L910.2,370.7 L910.8,361.1 L911.0,362.0 L911.8,373.4 L912.4,357.0 L912.6,361.8 L913.4,375.3 L913.6,374.8 L914.2,370.1 L914.7,363.9 L915.0,374.8 L915.8,358.5 L916.2,355.4 L916.6,373.1 L917.3,368.0 L917.4,369.0 L918.2,373.9 L918.8,374.0 L919.0,373.5 L919.8,373.1 L920.4,361.1 L920.6,362.1 L921.4,371.8 L921.6,358.0 L922.2,360.3 L923.0,368.8 L923.1,363.9 L923.8,366.8 L924.6,369.8 L924.7,369.9 L925.4,368.9 L926.2,369.0 L926.2,367.2 L927.0,368.5 L927.8,373.2 L927.8,369.5 L928.6,363.7 L929.3,359.1 L929.4,371.1 L930.2,369.8 L930.5,373.5 L931.0,374.0 L931.8,368.8 L932.1,367.1 L932.6,371.9 L933.4,363.2 L933.6,362.6 L934.2,369.6 L935.0,367.8 L935.2,368.5 L935.8,367.3 L936.6,361.9 L936.7,360.8 L937.4,367.1 L937.8,356.2 L938.2,355.4 L938.9,352.1 L939.0,359.9 L939.8,358.5 L940.1,359.1 L940.6,359.0 L941.2,333.5 L941.4,343.9 L941.9,360.0 L942.2,372.9 L943.0,366.6 L943.2,367.0 L943.8,378.1 L944.6,375.5 L944.7,374.7 L945.4,392.5 L946.2,382.7 L946.3,382.4 L947.0,394.8 L947.8,391.2 L947.8,390.2 L948.6,397.0 L949.3,398.3 L950.9,410.0 L951.0,405.0 L950.8,406.7 L950.1,408.2 L949.7,411.5 L949.3,412.2 L948.5,408.5 L948.0,418.1 L947.7,418.8 L946.9,412.5 L946.4,424.7 L946.1,426.1 L945.3,419.9 L944.8,432.9 L944.5,432.9 L943.7,428.4 L943.1,442.9 L942.9,443.7 L942.1,432.2 L942.0,454.1 L941.3,459.9 L941.0,461.2 L940.5,448.0 L939.8,447.9 L939.7,448.3 L938.9,449.1 L938.2,455.2 L938.1,456.0 L937.3,455.8 L937.0,476.6 L936.5,465.1 L935.7,454.9 L935.7,448.1 L934.9,450.3 L934.1,447.8 L934.1,447.7 L933.3,449.2 L932.5,445.2 L932.5,450.7 L931.7,448.3 L930.9,441.8 L930.8,447.6 L930.1,444.2 L929.3,441.5 L929.2,441.6 L928.5,443.7 L927.7,444.2 L927.5,447.5 L926.9,446.6 L926.1,443.5 L925.9,446.2 L925.3,447.2 L924.5,447.4 L924.3,449.3 L923.7,450.8 L922.9,446.8 L922.6,454.0 L922.1,452.4 L921.3,447.7 L921.0,450.8 L920.5,449.3 L919.7,446.5 L919.3,446.2 L918.9,448.9 L918.1,448.8 L918.0,454.5 L917.3,466.2 L916.9,473.6 L916.5,455.1 L916.1,459.1 L915.7,457.6 L914.9,449.0 L914.4,454.2 L914.1,453.0 L913.3,447.8 L912.8,450.9 L912.5,449.6 L911.7,446.5 L911.1,446.3 L910.9,446.8 L910.1,447.2 L909.5,450.9 L909.3,451.3 L908.5,446.4 L907.9,457.2 L907.7,456.6 L906.9,451.2 L906.2,454.5 L906.1,454.6 L905.3,454.4 L904.6,459.1 L904.5,459.2 L903.7,447.8 L903.0,461.9 L902.9,459.7 L902.1,446.0 L901.3,454.2 L901.3,452.9 L900.5,442.6 L900.0,441.8 L899.7,442.9 L898.9,443.0 L898.9,447.6 L898.1,451.2 L897.3,446.7 L897.2,456.9 L896.5,454.9 L895.7,449.4 L895.6,452.5 L894.9,451.0 L894.1,449.5 L893.9,449.6 L893.3,451.0 L892.5,451.4 L892.3,454.2 L891.7,455.8 L890.9,450.6 L890.7,459.6 L890.1,463.9 L889.5,471.5 L889.3,453.6 L888.5,467.1 L888.5,464.5 L887.7,448.2 L887.4,454.4 L886.9,450.0 L886.1,444.3 L885.7,405.0Z"/></g></svg>
<div id="play"></div>

<!-- toolbar -->
<div class="abs" style="left:187px;top:31px;width:85px;height:18px;background:#2d2f33;border-radius:3px;"></div>
<svg class="abs" style="left:0;top:0" width="1024" height="58"><path d="M261.6,38.3 L267.4,38.3 L264.5,41.6Z" fill="#b4b6ba"/></svg>
<div class="abs" style="left:351px;top:12px;width:50px;height:37px;background:#26282b;border-radius:3px;"></div>
<div class="abs" style="left:351px;top:30px;width:50px;height:1px;background:#1d1e21;border-radius:0px;"></div>
<svg class="abs" style="left:0;top:0" width="1024" height="58"><path d="M401,18.8 H419.5 V23 M401,40.6 H419.5 V36" fill="none" stroke="#7c7e82" stroke-width="1.1"/></svg>
<div class="abs" style="left:408px;top:22.4px;width:23px;height:14.0px;background:#2a476a;border-radius:2px;"></div>
<svg class="abs" style="left:0;top:0" width="1024" height="58"><g fill="none" stroke="#43628a" stroke-width="1.2"><rect x="415.5" y="27.6" width="4.5" height="4" rx="2"/><rect x="419" y="27.6" width="4.5" height="4" rx="2"/></g></svg>
<div class="abs" style="left:438.5px;top:10.5px;width:1.0px;height:38.2px;background:#2b2c2f;border-radius:0px;"></div>
<div class="abs" style="left:447.3px;top:31px;width:129.7px;height:18px;background:#2e3035;border-radius:3px;"></div>
<div class="abs" style="left:447.3px;top:31px;width:22.69999999999999px;height:18px;background:#303237;border-radius:3px;border-radius:3px 0 0 3px"></div>
<div class="abs" style="left:447.5px;top:45.3px;width:4.3px;height:3.6px;background:#3587b8;border-radius:2px 2px 1px 2px"></div>
<div class="abs" style="left:626px;top:11.3px;width:49.299999999999955px;height:38.2px;background:#2b2d31;border-radius:3px;"></div>
<div class="abs" style="left:626px;top:30px;width:49.299999999999955px;height:1px;background:#1d1e21;border-radius:0px;"></div>
<svg class="abs" style="left:0;top:0" width="1024" height="58"><path d="M676.6,21.1 H680 V27.3 H684 M684,32.5 H680 V38.7 H676.6 M713,21.1 H709.5 V27.3 H705.5 M705.5,32.5 H709.5 V38.7 H713" fill="none" stroke="#c5c7ca" stroke-width="1.2"/></svg>
<div class="abs" style="left:683.1px;top:21.7px;width:23.100000000000023px;height:16.000000000000004px;background:#2e86d2;border-radius:2.5px;"></div>
<svg class="abs" style="left:0;top:0" width="1024" height="58"><g fill="none" stroke="#ffffff" stroke-width="1.5"><rect x="690.6" y="27.8" width="5.6" height="4.4" rx="2.2"/><rect x="693.8" y="27.8" width="5.6" height="4.4" rx="2.2"/></g></svg>
<div class="abs" style="left:759.6px;top:11.8px;width:48.799999999999955px;height:37.2px;background:#2d2f33;border-radius:3px;"></div>
<div class="abs" style="left:759.6px;top:30px;width:48.799999999999955px;height:1px;background:#1d1e21;border-radius:0px;"></div>
<div class="abs" style="left:825px;top:11.8px;width:49.799999999999955px;height:37.2px;background:#2d2f33;border-radius:3px;"></div>
<div class="abs" style="left:825px;top:31px;width:49.799999999999955px;height:18px;background:#26282b;border-radius:3px;border-radius:0 0 3px 3px"></div>
<div class="abs" style="left:825px;top:30px;width:49.799999999999955px;height:1px;background:#1d1e21;border-radius:0px;"></div>
<div class="abs" style="left:869.5px;top:32.3px;width:3.3999999999999773px;height:14.700000000000003px;background:#3a7dc4;border-radius:0px;"></div>
<span class="tt2" style="left:142.50px;top:17.48px;color:#d4d6da;font-weight:normal;transform:scale(0.905,0.782)">検出</span>
<span class="tt2" style="left:142.50px;top:36.80px;color:#c4c6ca;font-weight:normal;transform:scale(0.775,0.800)">素材</span>
<span class="tt2" style="left:208.00px;top:36.82px;color:#c9cbcf;font-weight:normal;transform:scale(0.800,0.818)">長い無音</span>
<span class="tt2" style="left:280.10px;top:17.50px;color:#b8babe;font-weight:normal;transform:scale(0.644,0.820)">スレッショルドを開く</span>
<span class="tt2" style="left:280.10px;top:37.00px;color:#b8babe;font-weight:normal;transform:scale(0.641,0.780)">スレッショルドを閉じる</span>
<span class="tt2" style="left:356.00px;top:18.00px;color:#484b4f;font-weight:normal;transform:scale(0.902,0.700)">-30.00 dB</span>
<span class="tt2" style="left:356.00px;top:38.20px;color:#484b4f;font-weight:normal;transform:scale(0.902,0.700)">-30.00 dB</span>
<span class="tt2" style="left:448.30px;top:17.50px;color:#c9cbcf;font-weight:normal;transform:scale(0.718,0.780)">イベント</span>
<span class="tt2" style="left:451.40px;top:36.00px;color:#c9cbcf;font-weight:normal;transform:scale(0.739,0.880)">長さ</span>
<span class="tt2" style="left:542.00px;top:36.82px;color:#c4c6ca;font-weight:normal;transform:scale(0.842,0.818)">0.050 秒</span>
<span class="tt2" style="left:586.00px;top:18.21px;color:#c4c6ca;font-weight:normal;transform:scale(0.614,0.709)">プリロール</span>
<span class="tt2" style="left:586.00px;top:36.00px;color:#c4c6ca;font-weight:normal;transform:scale(0.629,0.800)">ポストロール</span>
<span class="tt2" style="left:634.70px;top:18.21px;color:#c4c6ca;font-weight:normal;transform:scale(0.842,0.709)">0.001 秒</span>
<span class="tt2" style="left:634.70px;top:36.77px;color:#c4c6ca;font-weight:normal;transform:scale(0.842,0.773)">0.001 秒</span>
<span class="tt2" style="left:716.02px;top:17.70px;color:#c4c6ca;font-weight:normal;transform:scale(0.583,0.780)">フェードイン</span>
<span class="tt2" style="left:715.99px;top:37.20px;color:#c4c6ca;font-weight:normal;transform:scale(0.612,0.780)">フェードアウト</span>
<span class="tt2" style="left:769.00px;top:18.41px;color:#d0d2d6;font-weight:normal;transform:scale(0.612,0.709)">プリロール</span>
<span class="tt2" style="left:765.40px;top:37.00px;color:#d0d2d6;font-weight:normal;transform:scale(0.635,0.800)">ポストロール</span>
<span class="tt2" style="left:834.80px;top:17.50px;color:#d0d2d6;font-weight:normal;transform:scale(0.650,0.800)">デフォルト</span>
<span class="tt2" style="left:840.60px;top:37.73px;color:#484b4f;font-weight:normal;transform:scale(0.920,0.727)">適用</span>
<span class="tt2" style="left:97.67px;top:86.03px;color:#d9f7ea;font-weight:normal;transform:scale(0.676,0.633)">トラック 5(2)</span>
</body></html>
